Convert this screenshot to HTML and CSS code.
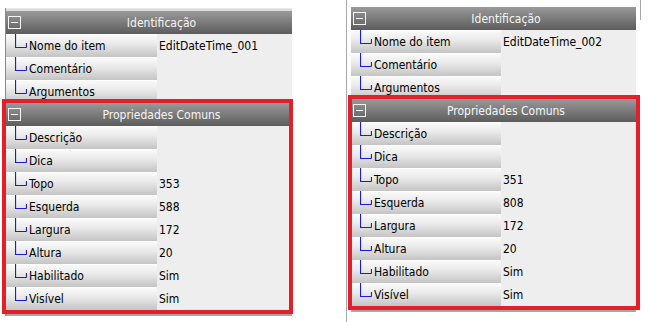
FILE: index.html
```html
<!DOCTYPE html>
<html lang="pt">
<head>
  <meta charset="UTF-8" />
  <title>Propriedades - EditDateTime</title>
  <link rel="stylesheet" href="styles.css">
</head>
<body>
  <div class="page">

    <!-- first control -->
    <div class="shot shot-left">
      <div class="strip"></div>
      <div class="grid">
        <div class="cat">
          <span class="toggle"></span>
          <span class="cat-title">Identificação</span>
        </div>
        <div class="row"><div class="name"><svg class="branch" viewBox="0 0 12 14"><path d="M0.5 0V13.5H11.5M11.5 9V13.5"/></svg>Nome do item</div><div class="value">EditDateTime_001</div></div>
        <div class="row"><div class="name"><svg class="branch" viewBox="0 0 12 14"><path d="M0.5 0V13.5H11.5M11.5 9V13.5"/></svg>Comentário</div><div class="value"></div></div>
        <div class="row"><div class="name"><svg class="branch" viewBox="0 0 12 14"><path d="M0.5 0V13.5H11.5M11.5 9V13.5"/></svg>Argumentos</div><div class="value"></div></div>

        <div class="cat">
          <span class="toggle"></span>
          <span class="cat-title">Propriedades Comuns</span>
        </div>
        <div class="row"><div class="name"><svg class="branch" viewBox="0 0 12 14"><path d="M0.5 0V13.5H11.5M11.5 9V13.5"/></svg>Descrição</div><div class="value"></div></div>
        <div class="row"><div class="name"><svg class="branch" viewBox="0 0 12 14"><path d="M0.5 0V13.5H11.5M11.5 9V13.5"/></svg>Dica</div><div class="value"></div></div>
        <div class="row"><div class="name"><svg class="branch" viewBox="0 0 12 14"><path d="M0.5 0V13.5H11.5M11.5 9V13.5"/></svg>Topo</div><div class="value">353</div></div>
        <div class="row"><div class="name"><svg class="branch" viewBox="0 0 12 14"><path d="M0.5 0V13.5H11.5M11.5 9V13.5"/></svg>Esquerda</div><div class="value">588</div></div>
        <div class="row"><div class="name"><svg class="branch" viewBox="0 0 12 14"><path d="M0.5 0V13.5H11.5M11.5 9V13.5"/></svg>Largura</div><div class="value">172</div></div>
        <div class="row"><div class="name"><svg class="branch" viewBox="0 0 12 14"><path d="M0.5 0V13.5H11.5M11.5 9V13.5"/></svg>Altura</div><div class="value">20</div></div>
        <div class="row"><div class="name"><svg class="branch" viewBox="0 0 12 14"><path d="M0.5 0V13.5H11.5M11.5 9V13.5"/></svg>Habilitado</div><div class="value">Sim</div></div>
        <div class="row"><div class="name"><svg class="branch" viewBox="0 0 12 14"><path d="M0.5 0V13.5H11.5M11.5 9V13.5"/></svg>Visível</div><div class="value">Sim</div></div>
      </div>
      <div class="grid-bottom"></div>
      <div class="highlight"></div>
    </div>

    <!-- second control -->
    <div class="shot shot-right">
      <div class="grid">
        <div class="cat">
          <span class="toggle"></span>
          <span class="cat-title">Identificação</span>
        </div>
        <div class="row"><div class="name"><svg class="branch" viewBox="0 0 12 14"><path d="M0.5 0V13.5H11.5M11.5 9V13.5"/></svg>Nome do item</div><div class="value">EditDateTime_002</div></div>
        <div class="row"><div class="name"><svg class="branch" viewBox="0 0 12 14"><path d="M0.5 0V13.5H11.5M11.5 9V13.5"/></svg>Comentário</div><div class="value"></div></div>
        <div class="row"><div class="name"><svg class="branch" viewBox="0 0 12 14"><path d="M0.5 0V13.5H11.5M11.5 9V13.5"/></svg>Argumentos</div><div class="value"></div></div>

        <div class="cat">
          <span class="toggle"></span>
          <span class="cat-title">Propriedades Comuns</span>
        </div>
        <div class="row"><div class="name"><svg class="branch" viewBox="0 0 12 14"><path d="M0.5 0V13.5H11.5M11.5 9V13.5"/></svg>Descrição</div><div class="value"></div></div>
        <div class="row"><div class="name"><svg class="branch" viewBox="0 0 12 14"><path d="M0.5 0V13.5H11.5M11.5 9V13.5"/></svg>Dica</div><div class="value"></div></div>
        <div class="row"><div class="name"><svg class="branch" viewBox="0 0 12 14"><path d="M0.5 0V13.5H11.5M11.5 9V13.5"/></svg>Topo</div><div class="value">351</div></div>
        <div class="row"><div class="name"><svg class="branch" viewBox="0 0 12 14"><path d="M0.5 0V13.5H11.5M11.5 9V13.5"/></svg>Esquerda</div><div class="value">808</div></div>
        <div class="row"><div class="name"><svg class="branch" viewBox="0 0 12 14"><path d="M0.5 0V13.5H11.5M11.5 9V13.5"/></svg>Largura</div><div class="value">172</div></div>
        <div class="row"><div class="name"><svg class="branch" viewBox="0 0 12 14"><path d="M0.5 0V13.5H11.5M11.5 9V13.5"/></svg>Altura</div><div class="value">20</div></div>
        <div class="row"><div class="name"><svg class="branch" viewBox="0 0 12 14"><path d="M0.5 0V13.5H11.5M11.5 9V13.5"/></svg>Habilitado</div><div class="value">Sim</div></div>
        <div class="row"><div class="name"><svg class="branch" viewBox="0 0 12 14"><path d="M0.5 0V13.5H11.5M11.5 9V13.5"/></svg>Visível</div><div class="value">Sim</div></div>
      </div>
      <div class="grid-bottom"></div>
      <div class="highlight"></div>
    </div>

  </div>
</body>
</html>
```

FILE: styles.css
```css
/* Base */
body {
  margin: 0;
  background-color: #fff;
  font-family: 'DejaVu Sans Condensed', 'DejaVu Sans', sans-serif;
  font-size: 12px;
  color: #000;
}

.page {
  display: flex;
  align-items: flex-start;
  height: 322px;
  overflow: hidden;
}

/* One captured property grid */
.shot {
  position: relative;
}

.shot-left {
  margin-left: 5px;
  margin-top: 8px;
  width: 286px;
  border-left: 1px solid #8a8a8a;
}

.shot-right {
  margin-left: 54px;
  height: 322px;
  width: 290px;
  padding-left: 4px;
  padding-top: 7px;
  box-sizing: border-box;
  border-left: 1px solid #a8a8a8;
}

/* short window edge at the top right of the second capture */
.shot-right::after {
  content: "";
  position: absolute;
  top: 0;
  right: -5px;
  width: 1px;
  height: 20px;
  background-color: #a8a8a8;
}

.strip {
  height: 3px;
  background-color: #dcdcdc;
  border-top: 1px solid #eaeaea;
  box-sizing: border-box;
}

/* Category header */
.cat {
  display: flex;
  align-items: center;
  height: 23px;
  padding-left: 2px;
  background: linear-gradient(to bottom, #9a9a9a, #5c5c5c);
  color: #f6f6f6;
}

.toggle {
  position: relative;
  width: 13px;
  height: 13px;
  border: 1px solid #f4f4f4;
  box-sizing: border-box;
}

.toggle::after {
  content: "";
  position: absolute;
  left: 2px;
  right: 2px;
  top: 5px;
  height: 1px;
  background-color: #f4f4f4;
}

.cat-title {
  flex: 1;
  padding-left: 10px;
  text-align: center;
}

/* Property rows */
.row {
  display: flex;
  height: 23px;
}

.name {
  display: flex;
  align-items: center;
  width: 151px;
  padding-left: 9px;
  box-sizing: border-box;
  background: linear-gradient(to bottom, #fafafa, #eaeaea 40%, #c4c4c4);
  border-top: 1px solid #fff;
}

.shot-right .name {
  width: 150px;
}

.branch {
  align-self: flex-start;
  width: 12px;
  height: 14px;
  margin-top: -1px;
  margin-right: 2px;
  fill: none;
  stroke: #1c1cd4;
  stroke-width: 1.2;
}

.value {
  flex: 1;
  display: flex;
  align-items: center;
  padding-left: 2px;
  background-color: #eeeeee;
}

.grid-bottom {
  height: 6px;
  background-color: #a6a6a6;
}

/* Red annotation frame drawn over the grid */
.highlight {
  position: absolute;
  border: 4px solid #e3202a;
  box-sizing: border-box;
  height: 215px;
}

.shot-left .highlight {
  left: -4px;
  top: 91px;
  width: 291px;
}

.shot-right .highlight {
  left: 1px;
  top: 95px;
  width: 292px;
}
```
